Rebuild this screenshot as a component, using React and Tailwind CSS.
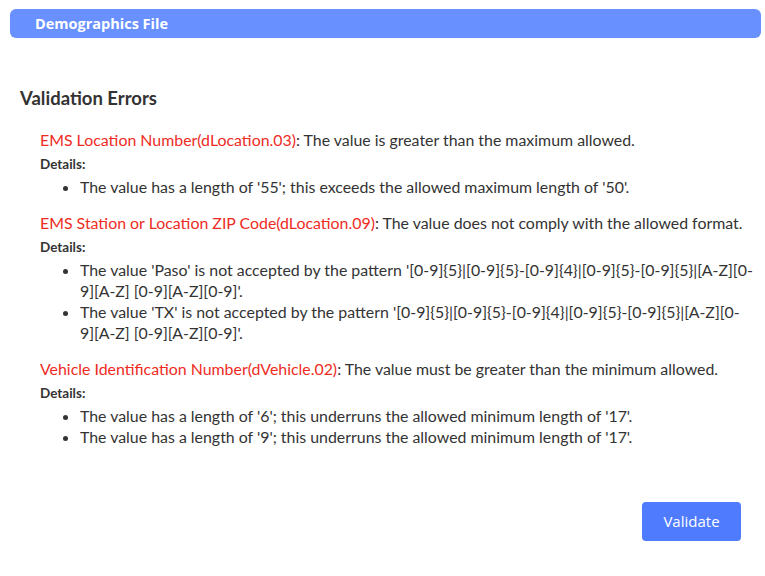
import React from "react";

const pattern = (value) => (
  <>
    The value '{value}' is not accepted by the pattern '[0-9]{"{5}"}|[0-9]{"{5}"}-[0-9]{"{4}"}|[0-9]{"{5}"}-[0-9]{"{5}"}|[A-Z][0-
    <span className="whitespace-nowrap">9][A-Z]</span> [0-9][A-Z][0-9]'.
  </>
);

const errors = [
  {
    field: "EMS Location Number(dLocation.03)",
    message: "The value is greater than the maximum allowed.",
    details: ["The value has a length of '55'; this exceeds the allowed maximum length of '50'."],
  },
  {
    field: "EMS Station or Location ZIP Code(dLocation.09)",
    message: "The value does not comply with the allowed format.",
    details: [pattern("Paso"), pattern("TX")],
  },
  {
    field: "Vehicle Identification Number(dVehicle.02)",
    message: "The value must be greater than the minimum allowed.",
    details: [
      "The value has a length of '6'; this underruns the allowed minimum length of '17'.",
      "The value has a length of '9'; this underruns the allowed minimum length of '17'.",
    ],
  },
];

const App = () => {
  return (
    <div className="w-[765px] h-[576px] bg-white pl-[10px] pr-[4px] pt-[9px] font-['Lato',sans-serif] text-[#333333]">
      <div className="h-[29px] rounded-[6px] bg-[#6891ff] pl-[25px] flex items-center">
        <span className="font-['Open_Sans',sans-serif] font-bold text-[14.5px] text-white">Demographics File</span>
      </div>

      <div className="pl-[10px] pr-[3px] pt-[48px]">
        <h2 className="font-bold text-[18.5px] leading-[24px]">Validation Errors</h2>

        <div className="pl-[20px] pt-[18px]">
          {errors.map((err, i) => (
            <div key={i} className="mb-[14px]">
              <p className="text-[15.9px] leading-[24px]">
                <span className="text-[#ee2b1e]">{err.field}</span>: {err.message}
              </p>
              <p className="text-[13.5px] font-bold leading-[22px] mt-[1px]">Details:</p>
              <ul className="list-disc pl-[40px] mt-[1px] text-[15.9px] leading-[21px]">
                {err.details.map((d, j) => (
                  <li key={j}>{d}</li>
                ))}
              </ul>
            </div>
          ))}
        </div>

        <div className="flex justify-end pr-[17px] mt-[55px]">
          <button className="w-[99px] h-[39px] rounded-[4px] bg-[#4f7cff] text-white text-[15px] font-['Open_Sans',sans-serif]">
            Validate
          </button>
        </div>
      </div>
    </div>
  );
};

export default App;
